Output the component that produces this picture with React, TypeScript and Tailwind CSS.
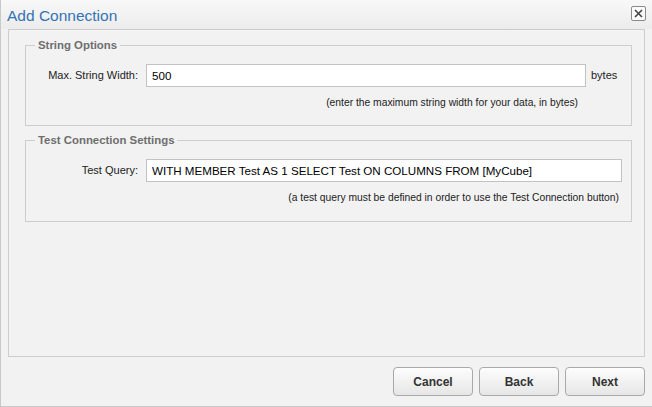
export default function App() {
    return (
        <div
            className="w-[652px] h-[407px] flex flex-col bg-[#f2f2f2] border-l border-b border-[#c9c9c9] text-[#222]"
            style={{ fontFamily: '"Liberation Sans", Arial, sans-serif' }}
        >
            {/* 헤더 */}
            <div className="h-[29px] shrink-0 flex items-center justify-between pl-[6px] pr-[6px] bg-gradient-to-b from-[#f8f8f8] to-[#ececec]">
                <span className="text-[15.5px] text-[#3473b5] leading-none mt-[2px]">Add Connection</span>
                <button className="w-[15px] h-[15px] flex items-center justify-center rounded-[2px] border border-[#8a8a8a] bg-[#fafafa] -mt-[2px]">
                    <svg width="9" height="9" viewBox="0 0 9 9">
                        <path d="M1 1 L8 8 M8 1 L1 8" stroke="#444" strokeWidth="1.6" />
                    </svg>
                </button>
            </div>

            {/* 본문 */}
            <div className="mx-[7px] h-[328px] border border-[#cdcdcd] bg-[#f2f2f2] pl-[16px] pr-[12px] pt-[7px] flex flex-col gap-[6px]">
                <fieldset className="border border-[#cdcdcd] h-[89px] pt-[10px]">
                    <legend className="ml-[9px] px-[3px] text-[11.4px] font-bold text-[#6e6e6e]">String Options</legend>
                    <div className="flex items-center">
                        <label className="w-[112px] text-right text-[11px]">Max. String Width:</label>
                        <input
                            defaultValue="500"
                            className="ml-[8px] w-[440px] h-[23px] border border-[#c2c2c2] bg-white px-[5px] text-[11.6px] text-black outline-none"
                        />
                        <span className="ml-[5px] text-[11px]">bytes</span>
                    </div>
                    <p className="mt-[8px] pr-[53px] text-right text-[10.3px]">(enter the maximum string width for your data, in bytes)</p>
                </fieldset>

                <fieldset className="border border-[#cdcdcd] h-[90px] pt-[10px]">
                    <legend className="ml-[9px] px-[3px] text-[11.4px] font-bold text-[#6e6e6e]">Test Connection Settings</legend>
                    <div className="flex items-center">
                        <label className="w-[112px] text-right text-[11px]">Test Query:</label>
                        <input
                            defaultValue="WITH MEMBER Test AS 1 SELECT Test ON COLUMNS FROM [MyCube]"
                            className="ml-[8px] w-[476px] h-[23px] border border-[#c2c2c2] bg-white px-[5px] text-[11.6px] text-black outline-none"
                        />
                    </div>
                    <p className="mt-[8px] pr-[12px] text-right text-[10.3px]">(a test query must be defined in order to use the Test Connection button)</p>
                </fieldset>
            </div>

            {/* 버튼 */}
            <div className="flex justify-end gap-[6px] pr-[7px] pt-[10px]">
                {["Cancel", "Back", "Next"].map((label) => (
                    <button
                        key={label}
                        className="w-[80px] h-[29px] rounded-[4px] border border-[#a9a9a9] bg-gradient-to-b from-[#fdfdfd] to-[#e6e6e6] text-[12px] font-bold text-[#333]"
                    >
                        {label}
                    </button>
                ))}
            </div>
        </div>
    );
}
